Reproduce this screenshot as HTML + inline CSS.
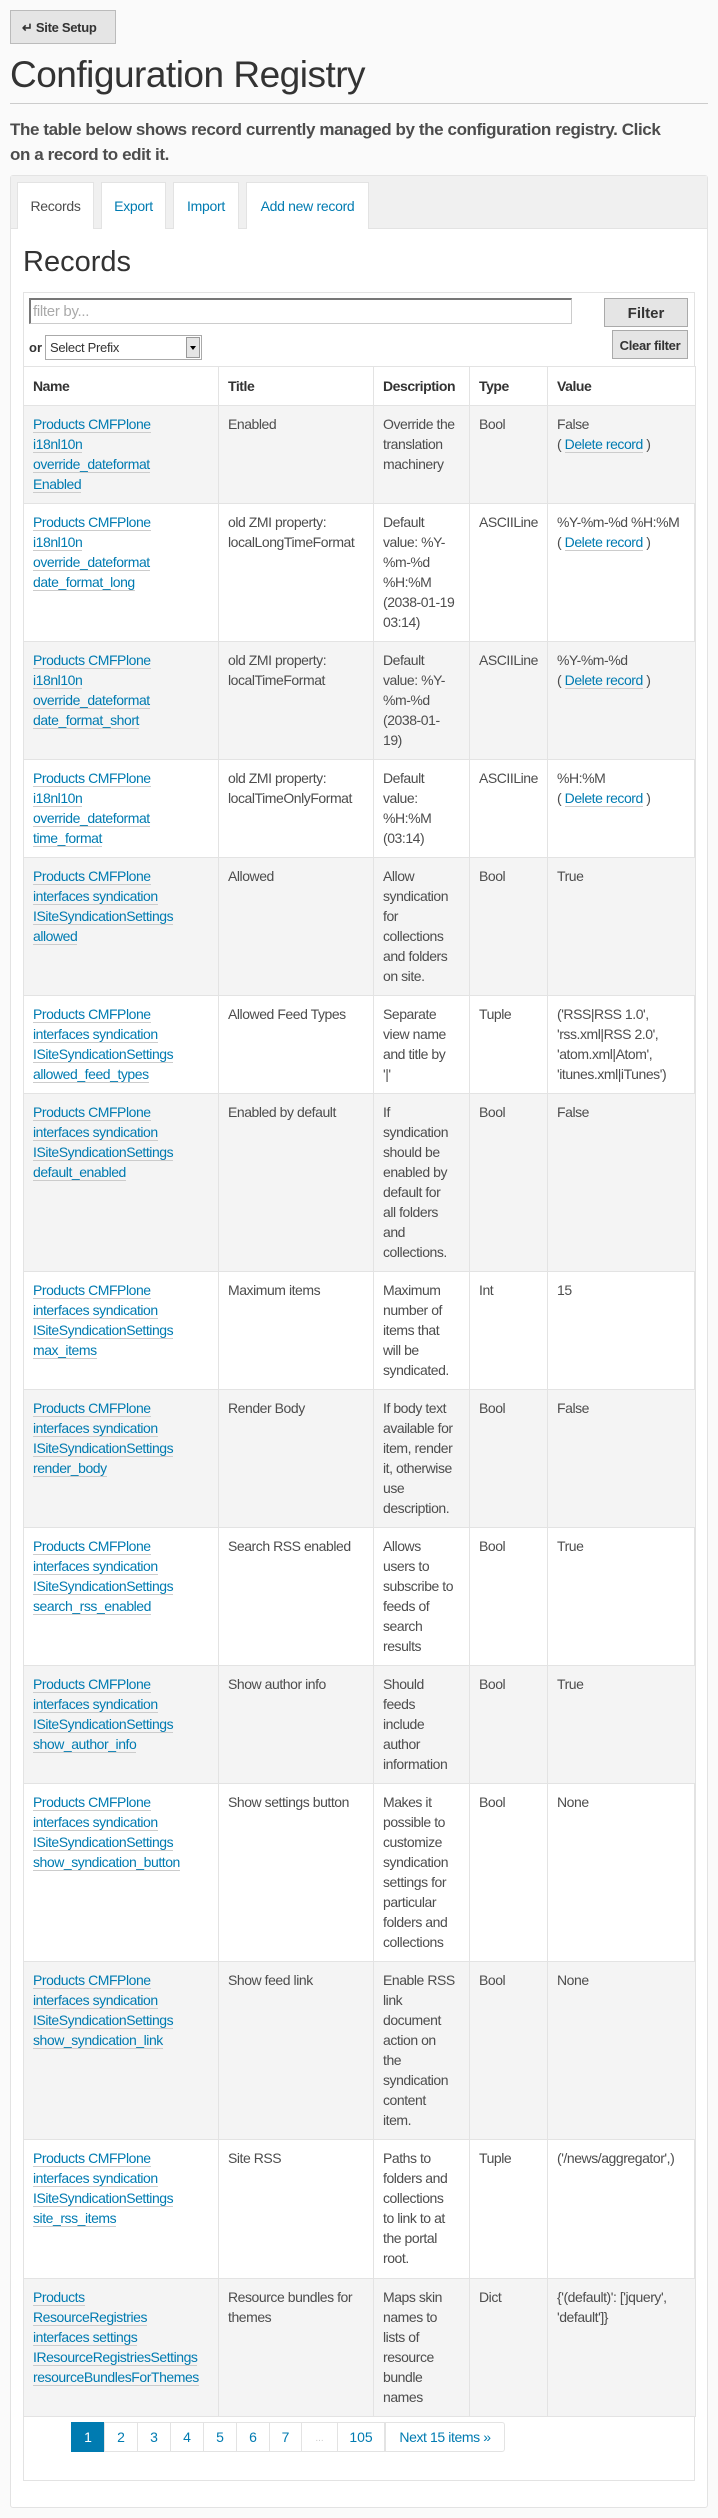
<!DOCTYPE html>
<html><head><meta charset="utf-8">
<style>
*{box-sizing:border-box;margin:0;padding:0}
body{width:718px;height:2518px;background:#fafafa;font-family:"Liberation Sans",sans-serif;color:#4d4d4d;position:relative;overflow:hidden}
.btn{position:absolute;left:10px;top:10px;width:106px;height:34px;background:#e5e5e5;border:1px solid #bbb;font-weight:bold;font-size:13px;color:#333;padding-top:9px;padding-left:11px;letter-spacing:-0.3px}
h1{position:absolute;left:10px;top:54px;font-size:37px;font-weight:normal;color:#333;letter-spacing:-0.5px}
.hr{position:absolute;left:10px;top:103px;width:698px;height:1px;background:#ccc}
.lead{position:absolute;left:10px;top:117px;width:705px;font-size:17px;font-weight:bold;line-height:25px;color:#4d4d4d;letter-spacing:-0.4px;white-space:nowrap}
.panel{position:absolute;left:10px;top:175px;width:698px;background:#fff;border:1px solid #e3e3e3;height:2333px;border-radius:3px}
.tabbar{position:absolute;left:0;top:0;width:696px;height:53px;background:#f0f0f0;border-bottom:1px solid #e3e3e3}
.tab{position:absolute;top:6px;height:47px;background:#fff;border:1px solid #e3e3e3;border-bottom:none;font-size:14px;color:#007bb1;padding-top:15px;text-align:center;letter-spacing:-0.3px}
h2{position:absolute;left:23px;top:246px;font-size:29px;font-weight:normal;color:#333}
.box{position:absolute;left:23px;top:292px;width:672px;height:2189px;border:1px solid #e3e3e3;background:#fff}
.inp{position:absolute;left:29px;top:298px;width:543px;height:26px;border:1px solid #ccc;border-top:2px solid #777;border-left:2px solid #777;font-size:15px;color:#aaa;padding:3px 2px;letter-spacing:-0.3px}
.fb{position:absolute;left:604px;top:298px;width:84px;height:29px;background:#e5e5e5;border:1px solid #aaa;font-weight:bold;font-size:15px;color:#333;text-align:center;padding-top:6px}
.cf{position:absolute;left:612px;top:330px;width:76px;height:29px;background:#e5e5e5;border:1px solid #aaa;font-weight:bold;font-size:13px;color:#333;text-align:center;padding-top:7px;letter-spacing:-0.3px}
.or{position:absolute;left:29px;top:340px;font-size:13px;font-weight:bold;color:#333}
.sel{position:absolute;left:45px;top:335px;width:157px;height:25px;border:1px solid #aaa;background:#fff;font-size:13px;color:#333;padding:4px 4px;letter-spacing:-0.3px}
.sel i{position:absolute;right:1px;top:1px;width:14px;height:21px;background:#e5e5e5;border:1px solid #999}
.sel i:after{content:"";position:absolute;left:3px;top:8px;border-left:3px solid transparent;border-right:3px solid transparent;border-top:4px solid #000}
table{position:absolute;left:23px;top:366px;border-collapse:collapse;font-size:14px;line-height:20px;letter-spacing:-0.45px}
td,th{border:1px solid #e3e3e3;vertical-align:top;padding:8px 9px 9px;text-align:left;white-space:nowrap;overflow:hidden}
th{font-weight:bold;color:#333;height:37px;padding-top:9px;background:#fff}
tr.g td{background:#f4f4f4}
a{color:#007bb1;text-decoration:none;border-bottom:1px solid #ccc}
.pg{position:absolute;top:2422px;height:30px;border:1px solid #e3e3e3;font-size:14px;color:#007bb1;text-align:center;padding-top:6px;background:#fff}
</style></head><body>
<div class="btn">↵ Site Setup</div>
<h1>Configuration Registry</h1>
<div class="hr"></div>
<div class="lead">The table below shows record currently managed by the configuration registry. Click<br>on a record to edit it.</div>
<div class="panel">
<div class="tabbar"></div>
<div class="tab" style="left:6px;width:77px;color:#4d4d4d">Records</div>
<div class="tab" style="left:90px;width:65px">Export</div>
<div class="tab" style="left:162px;width:66px">Import</div>
<div class="tab" style="left:235px;width:123px">Add new record</div>
</div>
<h2>Records</h2>
<div class="box"></div>
<div class="inp">filter by...</div>
<div class="fb">Filter</div>
<div class="cf">Clear filter</div>
<div class="or">or</div>
<div class="sel">Select Prefix<i></i></div>
<table>
<colgroup><col style="width:195px"><col style="width:155px"><col style="width:96px"><col style="width:78px"><col style="width:148px"></colgroup>
<tr><th>Name</th><th>Title</th><th>Description</th><th>Type</th><th>Value</th></tr>
<tr class="g" style="height:97px"><td><a>Products CMFPlone</a><br><a>i18nl10n</a><br><a>override_dateformat</a><br><a>Enabled</a></td><td>Enabled</td><td>Override the<br>translation<br>machinery</td><td>Bool</td><td>False<br>( <a>Delete record</a> )</td></tr>
<tr style="height:137px"><td><a>Products CMFPlone</a><br><a>i18nl10n</a><br><a>override_dateformat</a><br><a>date_format_long</a></td><td>old ZMI property:<br>localLongTimeFormat</td><td>Default<br>value: %Y-<br>%m-%d<br>%H:%M<br>(2038-01-19<br>03:14)</td><td>ASCIILine</td><td>%Y-%m-%d %H:%M<br>( <a>Delete record</a> )</td></tr>
<tr class="g" style="height:117px"><td><a>Products CMFPlone</a><br><a>i18nl10n</a><br><a>override_dateformat</a><br><a>date_format_short</a></td><td>old ZMI property:<br>localTimeFormat</td><td>Default<br>value: %Y-<br>%m-%d<br>(2038-01-<br>19)</td><td>ASCIILine</td><td>%Y-%m-%d<br>( <a>Delete record</a> )</td></tr>
<tr style="height:97px"><td><a>Products CMFPlone</a><br><a>i18nl10n</a><br><a>override_dateformat</a><br><a>time_format</a></td><td>old ZMI property:<br>localTimeOnlyFormat</td><td>Default<br>value:<br>%H:%M<br>(03:14)</td><td>ASCIILine</td><td>%H:%M<br>( <a>Delete record</a> )</td></tr>
<tr class="g" style="height:137px"><td><a>Products CMFPlone</a><br><a>interfaces syndication</a><br><a>ISiteSyndicationSettings</a><br><a>allowed</a></td><td>Allowed</td><td>Allow<br>syndication<br>for<br>collections<br>and folders<br>on site.</td><td>Bool</td><td>True</td></tr>
<tr style="height:98px"><td><a>Products CMFPlone</a><br><a>interfaces syndication</a><br><a>ISiteSyndicationSettings</a><br><a>allowed_feed_types</a></td><td>Allowed Feed Types</td><td>Separate<br>view name<br>and title by<br>'|'</td><td>Tuple</td><td>('RSS|RSS 1.0',<br>'rss.xml|RSS 2.0',<br>'atom.xml|Atom',<br>'itunes.xml|iTunes')</td></tr>
<tr class="g" style="height:176px"><td><a>Products CMFPlone</a><br><a>interfaces syndication</a><br><a>ISiteSyndicationSettings</a><br><a>default_enabled</a></td><td>Enabled by default</td><td>If<br>syndication<br>should be<br>enabled by<br>default for<br>all folders<br>and<br>collections.</td><td>Bool</td><td>False</td></tr>
<tr style="height:116px"><td><a>Products CMFPlone</a><br><a>interfaces syndication</a><br><a>ISiteSyndicationSettings</a><br><a>max_items</a></td><td>Maximum items</td><td>Maximum<br>number of<br>items that<br>will be<br>syndicated.</td><td>Int</td><td>15</td></tr>
<tr class="g" style="height:138px"><td><a>Products CMFPlone</a><br><a>interfaces syndication</a><br><a>ISiteSyndicationSettings</a><br><a>render_body</a></td><td>Render Body</td><td>If body text<br>available for<br>item, render<br>it, otherwise<br>use<br>description.</td><td>Bool</td><td>False</td></tr>
<tr style="height:138px"><td><a>Products CMFPlone</a><br><a>interfaces syndication</a><br><a>ISiteSyndicationSettings</a><br><a>search_rss_enabled</a></td><td>Search RSS enabled</td><td>Allows<br>users to<br>subscribe to<br>feeds of<br>search<br>results</td><td>Bool</td><td>True</td></tr>
<tr class="g" style="height:117px"><td><a>Products CMFPlone</a><br><a>interfaces syndication</a><br><a>ISiteSyndicationSettings</a><br><a>show_author_info</a></td><td>Show author info</td><td>Should<br>feeds<br>include<br>author<br>information</td><td>Bool</td><td>True</td></tr>
<tr style="height:175px"><td><a>Products CMFPlone</a><br><a>interfaces syndication</a><br><a>ISiteSyndicationSettings</a><br><a>show_syndication_button</a></td><td>Show settings button</td><td>Makes it<br>possible to<br>customize<br>syndication<br>settings for<br>particular<br>folders and<br>collections</td><td>Bool</td><td>None</td></tr>
<tr class="g" style="height:176px"><td><a>Products CMFPlone</a><br><a>interfaces syndication</a><br><a>ISiteSyndicationSettings</a><br><a>show_syndication_link</a></td><td>Show feed link</td><td>Enable RSS<br>link<br>document<br>action on<br>the<br>syndication<br>content<br>item.</td><td>Bool</td><td>None</td></tr>
<tr style="height:139px"><td><a>Products CMFPlone</a><br><a>interfaces syndication</a><br><a>ISiteSyndicationSettings</a><br><a>site_rss_items</a></td><td>Site RSS</td><td>Paths to<br>folders and<br>collections<br>to link to at<br>the portal<br>root.</td><td>Tuple</td><td>('/news/aggregator',)</td></tr>
<tr class="g" style="height:137px"><td><a>Products</a><br><a>ResourceRegistries</a><br><a>interfaces settings</a><br><a>IResourceRegistriesSettings</a><br><a>resourceBundlesForThemes</a></td><td>Resource bundles for<br>themes</td><td>Maps skin<br>names to<br>lists of<br>resource<br>bundle<br>names</td><td>Dict</td><td>{'(default)': ['jquery',<br>'default']}</td></tr>
</table>
<div class="pg" style="left:71px;width:34px;background:#007bb1;color:#fff;border-color:#007bb1">1</div>
<div class="pg" style="left:104px;width:34px">2</div>
<div class="pg" style="left:137px;width:34px">3</div>
<div class="pg" style="left:170px;width:34px">4</div>
<div class="pg" style="left:203px;width:34px">5</div>
<div class="pg" style="left:236px;width:34px">6</div>
<div class="pg" style="left:269px;width:33px">7</div>
<div class="pg" style="left:301px;width:37px;color:#ccc;font-size:10px;padding-top:10px">...</div>
<div class="pg" style="left:337px;width:48px">105</div>
<div class="pg" style="left:385px;width:120px;border-radius:0 3px 3px 0;letter-spacing:-0.4px">Next 15 items »</div>
</body></html>
